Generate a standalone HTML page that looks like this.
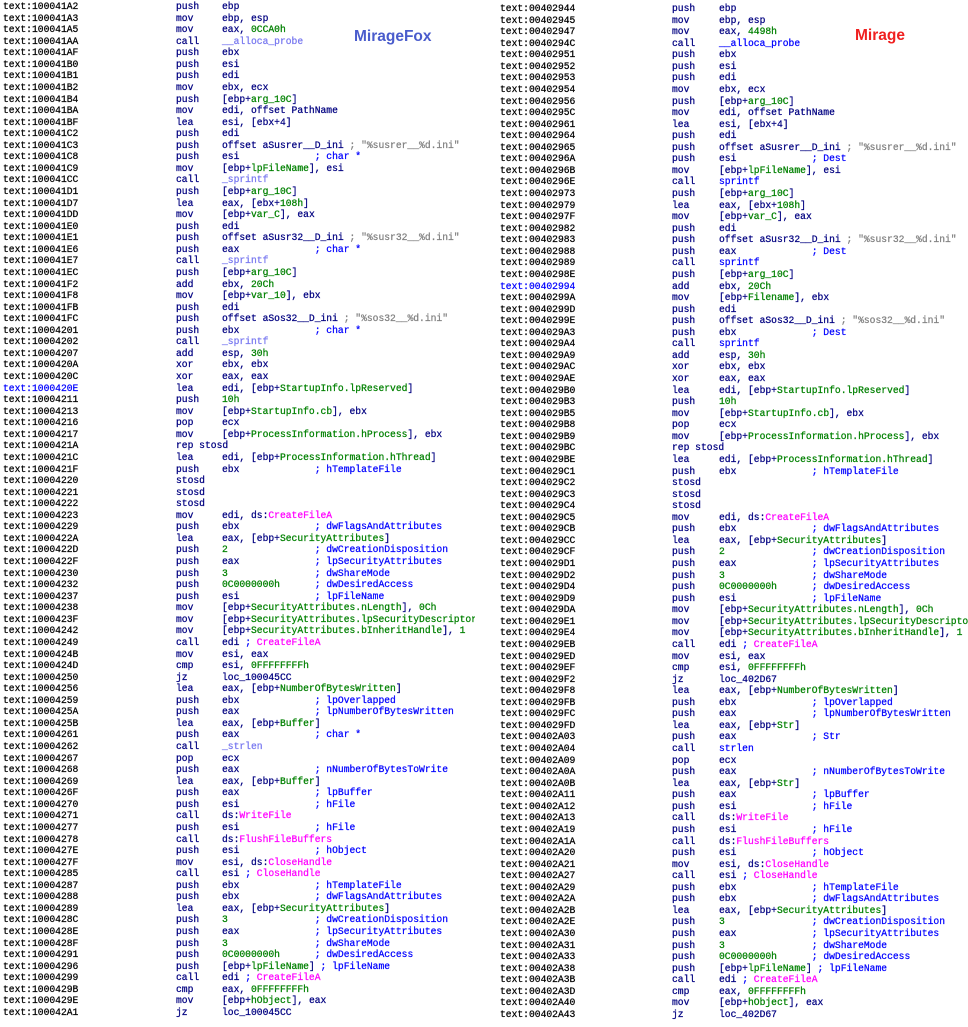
<!DOCTYPE html>
<html><head><meta charset="utf-8"><style>
body{margin:0;background:#fff;width:968px;height:1024px;overflow:hidden;position:relative}
.p{position:absolute;top:0;height:1024px;overflow:hidden;font-family:"Liberation Mono","DejaVu Sans Mono",monospace;font-size:9.67px;color:#000080;-webkit-text-stroke:0.25px}
#L{left:3px;width:472px}
#R{left:500px;width:468px}
.p div{position:relative;height:11.57px;line-height:11.57px;white-space:pre}
.p i,.p b,.p u{font-style:normal;font-weight:normal;text-decoration:none;position:absolute;top:0}
.p i{left:0;color:#000}
.p b{left:173px}
.p u{left:219px}
#R b{left:172px}
#R u{left:219px}
.g{color:#008000}.c{color:#0000ff}.m{color:#ff00ff}.l{color:#7878f0}.s{color:#808080}
.p i.h{color:#0000ff}
.t{position:absolute;font-family:"Liberation Sans",sans-serif;font-weight:bold;font-size:15.5px}
</style></head><body>
<div class="p" id="L" style="top:1px">
<div><i>text:100041A2</i><b>push</b><u>ebp</u></div>
<div><i>text:100041A3</i><b>mov</b><u>ebp, esp</u></div>
<div><i>text:100041A5</i><b>mov</b><u>eax, <span class="g">0CCA0h</span></u></div>
<div><i>text:100041AA</i><b>call</b><u><span class="l">__alloca_probe</span></u></div>
<div><i>text:100041AF</i><b>push</b><u>ebx</u></div>
<div><i>text:100041B0</i><b>push</b><u>esi</u></div>
<div><i>text:100041B1</i><b>push</b><u>edi</u></div>
<div><i>text:100041B2</i><b>mov</b><u>ebx, ecx</u></div>
<div><i>text:100041B4</i><b>push</b><u>[ebp+<span class="g">arg_10C</span>]</u></div>
<div><i>text:100041BA</i><b>mov</b><u>edi, offset PathName</u></div>
<div><i>text:100041BF</i><b>lea</b><u>esi, [ebx+4]</u></div>
<div><i>text:100041C2</i><b>push</b><u>edi</u></div>
<div><i>text:100041C3</i><b>push</b><u>offset aSusrer__D_ini <span class="s">; "%susrer__%d.ini"</span></u></div>
<div><i>text:100041C8</i><b>push</b><u>esi             <span class="c">; char *</span></u></div>
<div><i>text:100041C9</i><b>mov</b><u>[ebp+<span class="g">lpFileName</span>], esi</u></div>
<div><i>text:100041CC</i><b>call</b><u><span class="l">_sprintf</span></u></div>
<div><i>text:100041D1</i><b>push</b><u>[ebp+<span class="g">arg_10C</span>]</u></div>
<div><i>text:100041D7</i><b>lea</b><u>eax, [ebx+<span class="g">108h</span>]</u></div>
<div><i>text:100041DD</i><b>mov</b><u>[ebp+<span class="g">var_C</span>], eax</u></div>
<div><i>text:100041E0</i><b>push</b><u>edi</u></div>
<div><i>text:100041E1</i><b>push</b><u>offset aSusr32__D_ini <span class="s">; "%susr32__%d.ini"</span></u></div>
<div><i>text:100041E6</i><b>push</b><u>eax             <span class="c">; char *</span></u></div>
<div><i>text:100041E7</i><b>call</b><u><span class="l">_sprintf</span></u></div>
<div><i>text:100041EC</i><b>push</b><u>[ebp+<span class="g">arg_10C</span>]</u></div>
<div><i>text:100041F2</i><b>add</b><u>ebx, <span class="g">20Ch</span></u></div>
<div><i>text:100041F8</i><b>mov</b><u>[ebp+<span class="g">var_10</span>], ebx</u></div>
<div><i>text:100041FB</i><b>push</b><u>edi</u></div>
<div><i>text:100041FC</i><b>push</b><u>offset aSos32__D_ini <span class="s">; "%sos32__%d.ini"</span></u></div>
<div><i>text:10004201</i><b>push</b><u>ebx             <span class="c">; char *</span></u></div>
<div><i>text:10004202</i><b>call</b><u><span class="l">_sprintf</span></u></div>
<div><i>text:10004207</i><b>add</b><u>esp, <span class="g">30h</span></u></div>
<div><i>text:1000420A</i><b>xor</b><u>ebx, ebx</u></div>
<div><i>text:1000420C</i><b>xor</b><u>eax, eax</u></div>
<div><i class="h">text:1000420E</i><b>lea</b><u>edi, [ebp+<span class="g">StartupInfo.lpReserved</span>]</u></div>
<div><i>text:10004211</i><b>push</b><u><span class="g">10h</span></u></div>
<div><i>text:10004213</i><b>mov</b><u>[ebp+<span class="g">StartupInfo.cb</span>], ebx</u></div>
<div><i>text:10004216</i><b>pop</b><u>ecx</u></div>
<div><i>text:10004217</i><b>mov</b><u>[ebp+<span class="g">ProcessInformation.hProcess</span>], ebx</u></div>
<div><i>text:1000421A</i><b>rep stosd</b></div>
<div><i>text:1000421C</i><b>lea</b><u>edi, [ebp+<span class="g">ProcessInformation.hThread</span>]</u></div>
<div><i>text:1000421F</i><b>push</b><u>ebx             <span class="c">; hTemplateFile</span></u></div>
<div><i>text:10004220</i><b>stosd</b></div>
<div><i>text:10004221</i><b>stosd</b></div>
<div><i>text:10004222</i><b>stosd</b></div>
<div><i>text:10004223</i><b>mov</b><u>edi, ds:<span class="m">CreateFileA</span></u></div>
<div><i>text:10004229</i><b>push</b><u>ebx             <span class="c">; dwFlagsAndAttributes</span></u></div>
<div><i>text:1000422A</i><b>lea</b><u>eax, [ebp+<span class="g">SecurityAttributes</span>]</u></div>
<div><i>text:1000422D</i><b>push</b><u><span class="g">2</span>               <span class="c">; dwCreationDisposition</span></u></div>
<div><i>text:1000422F</i><b>push</b><u>eax             <span class="c">; lpSecurityAttributes</span></u></div>
<div><i>text:10004230</i><b>push</b><u><span class="g">3</span>               <span class="c">; dwShareMode</span></u></div>
<div><i>text:10004232</i><b>push</b><u><span class="g">0C0000000h</span>      <span class="c">; dwDesiredAccess</span></u></div>
<div><i>text:10004237</i><b>push</b><u>esi             <span class="c">; lpFileName</span></u></div>
<div><i>text:10004238</i><b>mov</b><u>[ebp+<span class="g">SecurityAttributes.nLength</span>], <span class="g">0Ch</span></u></div>
<div><i>text:1000423F</i><b>mov</b><u>[ebp+<span class="g">SecurityAttributes.lpSecurityDescriptor</span>], ebx</u></div>
<div><i>text:10004242</i><b>mov</b><u>[ebp+<span class="g">SecurityAttributes.bInheritHandle</span>], <span class="g">1</span></u></div>
<div><i>text:10004249</i><b>call</b><u>edi <span class="c">;</span> <span class="m">CreateFileA</span></u></div>
<div><i>text:1000424B</i><b>mov</b><u>esi, eax</u></div>
<div><i>text:1000424D</i><b>cmp</b><u>esi, <span class="g">0FFFFFFFFh</span></u></div>
<div><i>text:10004250</i><b>jz</b><u>loc_100045CC</u></div>
<div><i>text:10004256</i><b>lea</b><u>eax, [ebp+<span class="g">NumberOfBytesWritten</span>]</u></div>
<div><i>text:10004259</i><b>push</b><u>ebx             <span class="c">; lpOverlapped</span></u></div>
<div><i>text:1000425A</i><b>push</b><u>eax             <span class="c">; lpNumberOfBytesWritten</span></u></div>
<div><i>text:1000425B</i><b>lea</b><u>eax, [ebp+<span class="g">Buffer</span>]</u></div>
<div><i>text:10004261</i><b>push</b><u>eax             <span class="c">; char *</span></u></div>
<div><i>text:10004262</i><b>call</b><u><span class="l">_strlen</span></u></div>
<div><i>text:10004267</i><b>pop</b><u>ecx</u></div>
<div><i>text:10004268</i><b>push</b><u>eax             <span class="c">; nNumberOfBytesToWrite</span></u></div>
<div><i>text:10004269</i><b>lea</b><u>eax, [ebp+<span class="g">Buffer</span>]</u></div>
<div><i>text:1000426F</i><b>push</b><u>eax             <span class="c">; lpBuffer</span></u></div>
<div><i>text:10004270</i><b>push</b><u>esi             <span class="c">; hFile</span></u></div>
<div><i>text:10004271</i><b>call</b><u>ds:<span class="m">WriteFile</span></u></div>
<div><i>text:10004277</i><b>push</b><u>esi             <span class="c">; hFile</span></u></div>
<div><i>text:10004278</i><b>call</b><u>ds:<span class="m">FlushFileBuffers</span></u></div>
<div><i>text:1000427E</i><b>push</b><u>esi             <span class="c">; hObject</span></u></div>
<div><i>text:1000427F</i><b>mov</b><u>esi, ds:<span class="m">CloseHandle</span></u></div>
<div><i>text:10004285</i><b>call</b><u>esi <span class="c">;</span> <span class="m">CloseHandle</span></u></div>
<div><i>text:10004287</i><b>push</b><u>ebx             <span class="c">; hTemplateFile</span></u></div>
<div><i>text:10004288</i><b>push</b><u>ebx             <span class="c">; dwFlagsAndAttributes</span></u></div>
<div><i>text:10004289</i><b>lea</b><u>eax, [ebp+<span class="g">SecurityAttributes</span>]</u></div>
<div><i>text:1000428C</i><b>push</b><u><span class="g">3</span>               <span class="c">; dwCreationDisposition</span></u></div>
<div><i>text:1000428E</i><b>push</b><u>eax             <span class="c">; lpSecurityAttributes</span></u></div>
<div><i>text:1000428F</i><b>push</b><u><span class="g">3</span>               <span class="c">; dwShareMode</span></u></div>
<div><i>text:10004291</i><b>push</b><u><span class="g">0C0000000h</span>      <span class="c">; dwDesiredAccess</span></u></div>
<div><i>text:10004296</i><b>push</b><u>[ebp+<span class="g">lpFileName</span>] <span class="c">; lpFileName</span></u></div>
<div><i>text:10004299</i><b>call</b><u>edi <span class="c">;</span> <span class="m">CreateFileA</span></u></div>
<div><i>text:1000429B</i><b>cmp</b><u>eax, <span class="g">0FFFFFFFFh</span></u></div>
<div><i>text:1000429E</i><b>mov</b><u>[ebp+<span class="g">hObject</span>], eax</u></div>
<div><i>text:100042A1</i><b>jz</b><u>loc_100045CC</u></div>
</div>
<div class="p" id="R" style="top:3px">
<div><i>text:00402944</i><b>push</b><u>ebp</u></div>
<div><i>text:00402945</i><b>mov</b><u>ebp, esp</u></div>
<div><i>text:00402947</i><b>mov</b><u>eax, <span class="g">4498h</span></u></div>
<div><i>text:0040294C</i><b>call</b><u><span class="c">__alloca_probe</span></u></div>
<div><i>text:00402951</i><b>push</b><u>ebx</u></div>
<div><i>text:00402952</i><b>push</b><u>esi</u></div>
<div><i>text:00402953</i><b>push</b><u>edi</u></div>
<div><i>text:00402954</i><b>mov</b><u>ebx, ecx</u></div>
<div><i>text:00402956</i><b>push</b><u>[ebp+<span class="g">arg_10C</span>]</u></div>
<div><i>text:0040295C</i><b>mov</b><u>edi, offset PathName</u></div>
<div><i>text:00402961</i><b>lea</b><u>esi, [ebx+4]</u></div>
<div><i>text:00402964</i><b>push</b><u>edi</u></div>
<div><i>text:00402965</i><b>push</b><u>offset aSusrer__D_ini <span class="s">; "%susrer__%d.ini"</span></u></div>
<div><i>text:0040296A</i><b>push</b><u>esi             <span class="c">; Dest</span></u></div>
<div><i>text:0040296B</i><b>mov</b><u>[ebp+<span class="g">lpFileName</span>], esi</u></div>
<div><i>text:0040296E</i><b>call</b><u><span class="c">sprintf</span></u></div>
<div><i>text:00402973</i><b>push</b><u>[ebp+<span class="g">arg_10C</span>]</u></div>
<div><i>text:00402979</i><b>lea</b><u>eax, [ebx+<span class="g">108h</span>]</u></div>
<div><i>text:0040297F</i><b>mov</b><u>[ebp+<span class="g">var_C</span>], eax</u></div>
<div><i>text:00402982</i><b>push</b><u>edi</u></div>
<div><i>text:00402983</i><b>push</b><u>offset aSusr32__D_ini <span class="s">; "%susr32__%d.ini"</span></u></div>
<div><i>text:00402988</i><b>push</b><u>eax             <span class="c">; Dest</span></u></div>
<div><i>text:00402989</i><b>call</b><u><span class="c">sprintf</span></u></div>
<div><i>text:0040298E</i><b>push</b><u>[ebp+<span class="g">arg_10C</span>]</u></div>
<div><i class="h">text:00402994</i><b>add</b><u>ebx, <span class="g">20Ch</span></u></div>
<div><i>text:0040299A</i><b>mov</b><u>[ebp+<span class="g">Filename</span>], ebx</u></div>
<div><i>text:0040299D</i><b>push</b><u>edi</u></div>
<div><i>text:0040299E</i><b>push</b><u>offset aSos32__D_ini <span class="s">; "%sos32__%d.ini"</span></u></div>
<div><i>text:004029A3</i><b>push</b><u>ebx             <span class="c">; Dest</span></u></div>
<div><i>text:004029A4</i><b>call</b><u><span class="c">sprintf</span></u></div>
<div><i>text:004029A9</i><b>add</b><u>esp, <span class="g">30h</span></u></div>
<div><i>text:004029AC</i><b>xor</b><u>ebx, ebx</u></div>
<div><i>text:004029AE</i><b>xor</b><u>eax, eax</u></div>
<div><i>text:004029B0</i><b>lea</b><u>edi, [ebp+<span class="g">StartupInfo.lpReserved</span>]</u></div>
<div><i>text:004029B3</i><b>push</b><u><span class="g">10h</span></u></div>
<div><i>text:004029B5</i><b>mov</b><u>[ebp+<span class="g">StartupInfo.cb</span>], ebx</u></div>
<div><i>text:004029B8</i><b>pop</b><u>ecx</u></div>
<div><i>text:004029B9</i><b>mov</b><u>[ebp+<span class="g">ProcessInformation.hProcess</span>], ebx</u></div>
<div><i>text:004029BC</i><b>rep stosd</b></div>
<div><i>text:004029BE</i><b>lea</b><u>edi, [ebp+<span class="g">ProcessInformation.hThread</span>]</u></div>
<div><i>text:004029C1</i><b>push</b><u>ebx             <span class="c">; hTemplateFile</span></u></div>
<div><i>text:004029C2</i><b>stosd</b></div>
<div><i>text:004029C3</i><b>stosd</b></div>
<div><i>text:004029C4</i><b>stosd</b></div>
<div><i>text:004029C5</i><b>mov</b><u>edi, ds:<span class="m">CreateFileA</span></u></div>
<div><i>text:004029CB</i><b>push</b><u>ebx             <span class="c">; dwFlagsAndAttributes</span></u></div>
<div><i>text:004029CC</i><b>lea</b><u>eax, [ebp+<span class="g">SecurityAttributes</span>]</u></div>
<div><i>text:004029CF</i><b>push</b><u><span class="g">2</span>               <span class="c">; dwCreationDisposition</span></u></div>
<div><i>text:004029D1</i><b>push</b><u>eax             <span class="c">; lpSecurityAttributes</span></u></div>
<div><i>text:004029D2</i><b>push</b><u><span class="g">3</span>               <span class="c">; dwShareMode</span></u></div>
<div><i>text:004029D4</i><b>push</b><u><span class="g">0C0000000h</span>      <span class="c">; dwDesiredAccess</span></u></div>
<div><i>text:004029D9</i><b>push</b><u>esi             <span class="c">; lpFileName</span></u></div>
<div><i>text:004029DA</i><b>mov</b><u>[ebp+<span class="g">SecurityAttributes.nLength</span>], <span class="g">0Ch</span></u></div>
<div><i>text:004029E1</i><b>mov</b><u>[ebp+<span class="g">SecurityAttributes.lpSecurityDescriptor</span>], ebx</u></div>
<div><i>text:004029E4</i><b>mov</b><u>[ebp+<span class="g">SecurityAttributes.bInheritHandle</span>], <span class="g">1</span></u></div>
<div><i>text:004029EB</i><b>call</b><u>edi <span class="c">;</span> <span class="m">CreateFileA</span></u></div>
<div><i>text:004029ED</i><b>mov</b><u>esi, eax</u></div>
<div><i>text:004029EF</i><b>cmp</b><u>esi, <span class="g">0FFFFFFFFh</span></u></div>
<div><i>text:004029F2</i><b>jz</b><u>loc_402D67</u></div>
<div><i>text:004029F8</i><b>lea</b><u>eax, [ebp+<span class="g">NumberOfBytesWritten</span>]</u></div>
<div><i>text:004029FB</i><b>push</b><u>ebx             <span class="c">; lpOverlapped</span></u></div>
<div><i>text:004029FC</i><b>push</b><u>eax             <span class="c">; lpNumberOfBytesWritten</span></u></div>
<div><i>text:004029FD</i><b>lea</b><u>eax, [ebp+<span class="g">Str</span>]</u></div>
<div><i>text:00402A03</i><b>push</b><u>eax             <span class="c">; Str</span></u></div>
<div><i>text:00402A04</i><b>call</b><u><span class="c">strlen</span></u></div>
<div><i>text:00402A09</i><b>pop</b><u>ecx</u></div>
<div><i>text:00402A0A</i><b>push</b><u>eax             <span class="c">; nNumberOfBytesToWrite</span></u></div>
<div><i>text:00402A0B</i><b>lea</b><u>eax, [ebp+<span class="g">Str</span>]</u></div>
<div><i>text:00402A11</i><b>push</b><u>eax             <span class="c">; lpBuffer</span></u></div>
<div><i>text:00402A12</i><b>push</b><u>esi             <span class="c">; hFile</span></u></div>
<div><i>text:00402A13</i><b>call</b><u>ds:<span class="m">WriteFile</span></u></div>
<div><i>text:00402A19</i><b>push</b><u>esi             <span class="c">; hFile</span></u></div>
<div><i>text:00402A1A</i><b>call</b><u>ds:<span class="m">FlushFileBuffers</span></u></div>
<div><i>text:00402A20</i><b>push</b><u>esi             <span class="c">; hObject</span></u></div>
<div><i>text:00402A21</i><b>mov</b><u>esi, ds:<span class="m">CloseHandle</span></u></div>
<div><i>text:00402A27</i><b>call</b><u>esi <span class="c">;</span> <span class="m">CloseHandle</span></u></div>
<div><i>text:00402A29</i><b>push</b><u>ebx             <span class="c">; hTemplateFile</span></u></div>
<div><i>text:00402A2A</i><b>push</b><u>ebx             <span class="c">; dwFlagsAndAttributes</span></u></div>
<div><i>text:00402A2B</i><b>lea</b><u>eax, [ebp+<span class="g">SecurityAttributes</span>]</u></div>
<div><i>text:00402A2E</i><b>push</b><u><span class="g">3</span>               <span class="c">; dwCreationDisposition</span></u></div>
<div><i>text:00402A30</i><b>push</b><u>eax             <span class="c">; lpSecurityAttributes</span></u></div>
<div><i>text:00402A31</i><b>push</b><u><span class="g">3</span>               <span class="c">; dwShareMode</span></u></div>
<div><i>text:00402A33</i><b>push</b><u><span class="g">0C0000000h</span>      <span class="c">; dwDesiredAccess</span></u></div>
<div><i>text:00402A38</i><b>push</b><u>[ebp+<span class="g">lpFileName</span>] <span class="c">; lpFileName</span></u></div>
<div><i>text:00402A3B</i><b>call</b><u>edi <span class="c">;</span> <span class="m">CreateFileA</span></u></div>
<div><i>text:00402A3D</i><b>cmp</b><u>eax, <span class="g">0FFFFFFFFh</span></u></div>
<div><i>text:00402A40</i><b>mov</b><u>[ebp+<span class="g">hObject</span>], eax</u></div>
<div><i>text:00402A43</i><b>jz</b><u>loc_402D67</u></div>
</div>
<div class="t" style="left:354px;top:28px;color:#4a5ccc">MirageFox</div>
<div class="t" style="left:855px;top:27px;color:#f02020">Mirage</div>
</body></html>
